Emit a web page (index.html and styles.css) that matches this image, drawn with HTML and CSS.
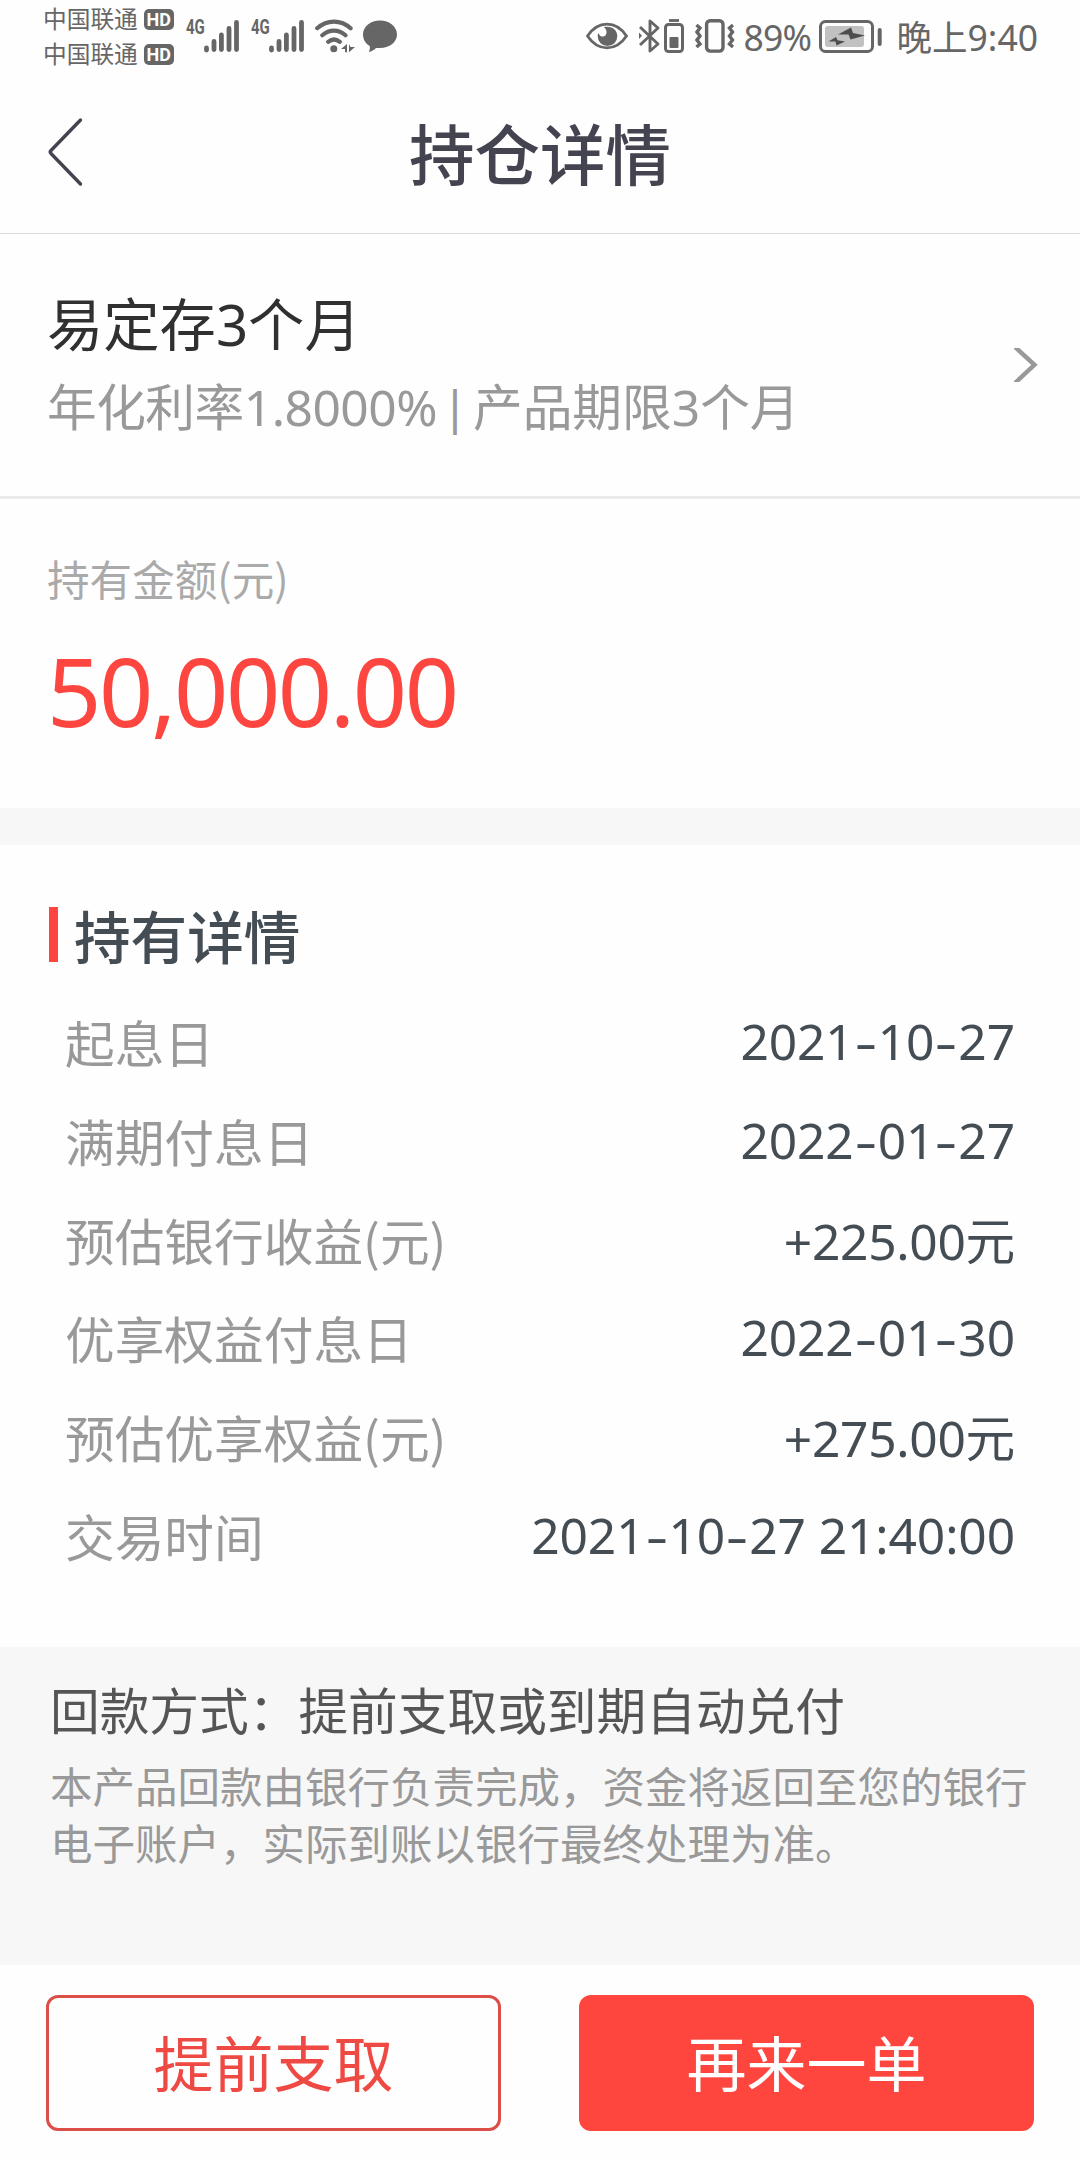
FILE: index.html
```
<!DOCTYPE html>
<html lang="zh-CN">
<head>
  <meta charset="UTF-8">
  <meta name="viewport" content="width=device-width, initial-scale=1.0">
  <title>持仓详情</title>
  <link rel="stylesheet" href="styles.css">
</head>
<body>
  <!-- Status bar -->
  <div class="status">
    <div class="status-left">
      <div class="carriers">
        <div class="carrier">中国联通<span class="hd">HD</span></div>
        <div class="carrier">中国联通<span class="hd">HD</span></div>
      </div>
      <div class="signal">
        <span class="net">4G</span>
        <svg width="36" height="34" viewBox="0 0 36 34" stroke="#666" stroke-width="4.8" stroke-linecap="round">
          <path d="M2.5 29v2M10 22.4v8.200M17.400 16v14.600M25 9.400v21.200M32.500 3.400v27.200"/>
        </svg>
      </div>
      <div class="signal">
        <span class="net">4G</span>
        <svg width="36" height="34" viewBox="0 0 36 34" stroke="#666" stroke-width="4.8" stroke-linecap="round">
          <path d="M2.500 29v2M10 22.400v8.200M17.400 16v14.600M25 9.400v21.200M32.500 3.400v27.200"/>
        </svg>
      </div>
      <svg class="wifi" width="40" height="34" viewBox="0 0 40 34" fill="none" stroke="#666" stroke-width="4.200" stroke-linecap="round">
        <path d="M2.200 9.200C12 .3 26 .3 35.600 9.200M7.300 16.200c7-6.200 16.200-6.200 23.200 0M13.200 22.800c3.600-2.900 8-2.900 11.600 0"/>
        <circle cx="18.800" cy="29.700" r="3.500" fill="#666" stroke="none"/>
        <path d="M32 25v8.200h-2v-3.200h-4zM34 33.200V25l1.500 3H40z" fill="#666" stroke="none"/>
      </svg>
      <svg class="bubble" width="34" height="33" viewBox="0 0 34 33" fill="#666">
        <path d="M17 .6c9.400 0 17 6.100 17 13.800S26.400 28 17 28c-1.500 0-2.800-.2-4 .1-2 2-4.500 3.500-7.200 4 .8-1.900 1.400-4 .9-6.200C2.600 23.500 0 19.300 0 14.400 0 6.700 7.600.6 17 .6z"/>
      </svg>
    </div>
    <div class="status-right">
      <svg class="eye" width="42" height="28" viewBox="0 0 42 28">
        <path d="M1.500 14C12-1.800 30-1.800 40.500 14 30 29.800 12 29.800 1.500 14z" fill="none" stroke="#666" stroke-width="2.800"/>
        <path d="M18 5c8-1.500 13.300 3 13.300 9.200a9.700 9.700 0 0 1-19.600 0c0-1.200.2-2.300.7-3.200 1 2.800 3.200 4 5.200 3.500 3.500-.9 4.200-6 .4-9.500z" fill="#666"/>
      </svg>
      <svg class="bt" width="22" height="36" viewBox="0 0 22 36" fill="none" stroke="#666" stroke-width="2.900" stroke-linejoin="round">
        <path d="M1 9l18 17-8 7V3l8 7L1 27"/>
        <path d="M0 14.500l3 3.300-3 3.300z" fill="#666" stroke="none"/>
      </svg>
      <svg class="cell" width="20" height="36" viewBox="0 0 20 36">
        <rect x="1.500" y="6.500" width="17" height="27" rx="3" fill="none" stroke="#666" stroke-width="3"/>
        <path d="M5 2.500h10" stroke="#666" stroke-width="2.800"/>
        <rect x="5.500" y="19" width="9" height="11" rx="1" fill="#666"/>
      </svg>
      <svg class="vibrate" width="40" height="34" viewBox="0 0 40 34" fill="none" stroke="#666">
        <rect x="11.600" y="1.700" width="16.400" height="30.400" rx="3.500" stroke-width="3.400"/>
        <path d="M1.500 6l3.500 3-3 4 3 4-3 4 3 4-3.500 3M38 6l-3.500 3 3 4-3 4 3 4-3 4 3.500 3" stroke-width="3.400"/>
      </svg>
      <span class="percent">89%</span>
      <svg class="battery" width="64" height="34" viewBox="0 0 64 34">
        <rect x="1.500" y="1.500" width="52" height="30" rx="5" fill="none" stroke="#666" stroke-width="3"/>
        <rect x="6" y="6" width="39" height="21" rx="3" fill="#c1c1c1"/>
        <path d="M60.700 10v14" stroke="#666" stroke-width="4" stroke-linecap="round"/>
        <path d="M32 7.500L19 14.500h10.500l2 5L46 15.500l-12-2.500zM17 17L9.500 21.500h7l1 4 8.500-4-7.500-1.200z" fill="#4d4d4d"/>
      </svg>
      <span class="clock">晚上9:40</span>
    </div>
  </div>

  <!-- Title bar -->
  <header class="header">
    <svg class="back" width="36" height="70" viewBox="0 0 36 70" fill="none" stroke="#444350" stroke-width="3.400" stroke-linecap="round" stroke-linejoin="round">
      <path d="M33.500 3L4 33.500Q2.500 35 4 36.500L33.500 67"/>
    </svg>
    <h1>持仓详情</h1>
  </header>

  <main>
    <!-- Product -->
    <section class="product">
      <div class="product-info">
        <h2>易定存3个月</h2>
        <p><span class="rate">年化利率1.8000%</span><span class="divider">|</span><span>产品期限3个月</span></p>
      </div>
      <svg class="arrow" width="24" height="34" viewBox="0 0 24 34" fill="none" stroke="#999" stroke-width="4.400">
        <path d="M1-1l19.500 17.800L1 35"/>
      </svg>
    </section>

    <!-- Amount -->
    <section class="amount">
      <p class="amount-label">持有金额(元)</p>
      <p class="amount-value">50,000.00</p>
    </section>

    <!-- Holding details -->
    <section class="details">
      <h2>持有详情</h2>
      <dl>
        <div class="row"><dt>起息日</dt><dd>2021<i>-</i>10<i>-</i>27</dd></div>
        <div class="row"><dt>满期付息日</dt><dd>2022<i>-</i>01<i>-</i>27</dd></div>
        <div class="row"><dt>预估银行收益(元)</dt><dd class="money">+225.00元</dd></div>
        <div class="row"><dt>优享权益付息日</dt><dd>2022<i>-</i>01<i>-</i>30</dd></div>
        <div class="row"><dt>预估优享权益(元)</dt><dd class="money">+275.00元</dd></div>
        <div class="row"><dt>交易时间</dt><dd>2021<i>-</i>10<i>-</i>27 21:40:00</dd></div>
      </dl>
    </section>

    <!-- Repayment note -->
    <section class="note">
      <h3>回款方式：提前支取或到期自动兑付</h3>
      <p>本产品回款由银行负责完成，资金将返回至您的银行电子账户，实际到账以银行最终处理为准。</p>
    </section>
  </main>

  <footer class="actions">
    <button class="btn btn-outline">提前支取</button>
    <button class="btn btn-primary">再来一单</button>
  </footer>
</body>
</html>
```

FILE: styles.css
```
* {
  box-sizing: border-box;
}

body {
  margin: 0;
  width: 1080px;
  height: 2160px;
  overflow: hidden;
  display: flex;
  flex-direction: column;
  background-color: #fefefe;
  color: #444c54;
  font-family: "Noto Sans", "Noto Sans CJK SC", sans-serif;
}

h1, h2, h3, p, dl, dd {
  margin: 0;
  font-weight: 400;
}

svg {
  display: block;
  flex: none;
}

/* Status bar */
.status {
  display: flex;
  justify-content: space-between;
  height: 80px;
  padding: 0 42px 0 43px;
  color: #666;
}

.status-left,
.status-right {
  display: flex;
  align-items: flex-start;
}

.carriers {
  width: 143px;
  padding-top: 2px;
}

.carrier {
  display: flex;
  align-items: center;
  height: 35px;
  font-size: 23.7px;
  line-height: 35px;
  white-space: nowrap;
}

.hd {
  width: 30px;
  height: 21px;
  margin-left: 6px;
  border-radius: 5px;
  background-color: #666;
  color: #fefefe;
  font: bold 18px/21px Roboto, sans-serif;
  text-align: center;
}

.signal {
  display: flex;
  width: 65px;
  padding-top: 19px;
}

.net {
  width: 18px;
  font: bold 20px/16px Roboto, sans-serif;
  transform: scaleX(0.75);
  transform-origin: left;
}

.wifi {
  margin: 19px 0 0 -1px;
}

.bubble {
  margin: 20px 0 0 8px;
}

.eye {
  margin: 22px 11px 0 0;
}

.bt {
  margin: 18px 3px 0 0;
}

.cell {
  margin: 18px 11px 0 0;
}

.vibrate {
  margin: 19px 9px 0 0;
}

.percent {
  width: 75px;
  font-size: 35.500px;
  line-height: 74px;
  letter-spacing: -0.800px;
}

.battery {
  margin-top: 20px;
}

.clock {
  margin-left: 14px;
  font-size: 35.500px;
  line-height: 74px;
}

/* Title bar */
.header {
  display: flex;
  align-items: center;
  height: 154px;
  padding: 0 47px;
  border-bottom: 1px solid #dcdcdc;
  color: #444350;
}

.header h1 {
  flex: 1;
  margin: 0 36px 4px 0;
  font-size: 65.500px;
  font-weight: 500;
  line-height: 100px;
  text-align: center;
}

.back {
  margin-bottom: 9px;
}

/* Product */
.product {
  display: flex;
  justify-content: space-between;
  height: 265px;
  padding: 48px 42px 0 47px;
  border-bottom: 3px solid #ebebeb;
}

.product h2 {
  color: #303030;
  font-size: 56.300px;
  line-height: 84px;
}

.product p {
  display: flex;
  color: #999;
  font-size: 49.700px;
  line-height: 82px;
}

.rate {
  letter-spacing: -0.500px;
}

.divider {
  width: 36px;
  text-align: center;
  transform: scaleY(0.9);
}

.arrow {
  margin-top: 66px;
}

/* Amount */
.amount {
  height: 309px;
  padding: 47px 47px 0;
}

.amount-label {
  color: #aaa;
  font-family: "Noto Sans CJK SC", sans-serif;
  font-size: 42.600px;
  line-height: 64px;
}

.amount-value {
  color: #fd463f;
  font-size: 95px;
  line-height: 120px;
  letter-spacing: -2.400px;
  margin-top: 20px;
}

/* Holding details */
.details {
  height: 839px;
  padding-top: 53px;
  border-top: 37px solid #f7f7f7;
}

.details h2 {
  display: flex;
  align-items: center;
  height: 72px;
  margin-left: 49px;
  font-size: 56.600px;
  font-weight: 500;
}

.details h2::before {
  content: "";
  width: 9px;
  height: 55px;
  margin-right: 16px;
  background-color: #fd463f;
}

.details dl {
  margin-top: 22px;
  padding: 0 65px;
}

.row {
  display: flex;
  justify-content: space-between;
  height: 98.800px;
  font-size: 49.700px;
  line-height: 98.800px;
}

.row dt {
  color: #999;
  font-family: "Noto Sans CJK SC", sans-serif;
}

.row dd {
  letter-spacing: -0.100px;
}

.row .money {
  padding-top: 2px;
  letter-spacing: -0.300px;
}

.row i {
  display: inline-block;
  width: 24px;
  font-style: normal;
  text-align: center;
  transform: scaleX(1.400);
}

/* Repayment note */
.note {
  height: 318px;
  padding: 26px 40px 0 50px;
  background-color: #f7f7f7;
}

.note h3 {
  color: #555;
  font-size: 49.700px;
  line-height: 76px;
}

.note p {
  margin-top: 10px;
  color: #999;
  font-size: 42.500px;
  line-height: 56.500px;
}

/* Bottom buttons */
.actions {
  display: flex;
  justify-content: space-between;
  padding: 30px 46px 0;
}

.btn {
  width: 455px;
  height: 136px;
  padding: 0 0 4px;
  border: 3px solid #dc4f48;
  border-radius: 12px;
  background-color: #fefefe;
  color: #ee4a43;
  font-family: inherit;
  font-size: 60px;
  cursor: pointer;
}

.btn-primary {
  border-color: #fe463f;
  background-color: #fe463f;
  color: #fff;
}
```
